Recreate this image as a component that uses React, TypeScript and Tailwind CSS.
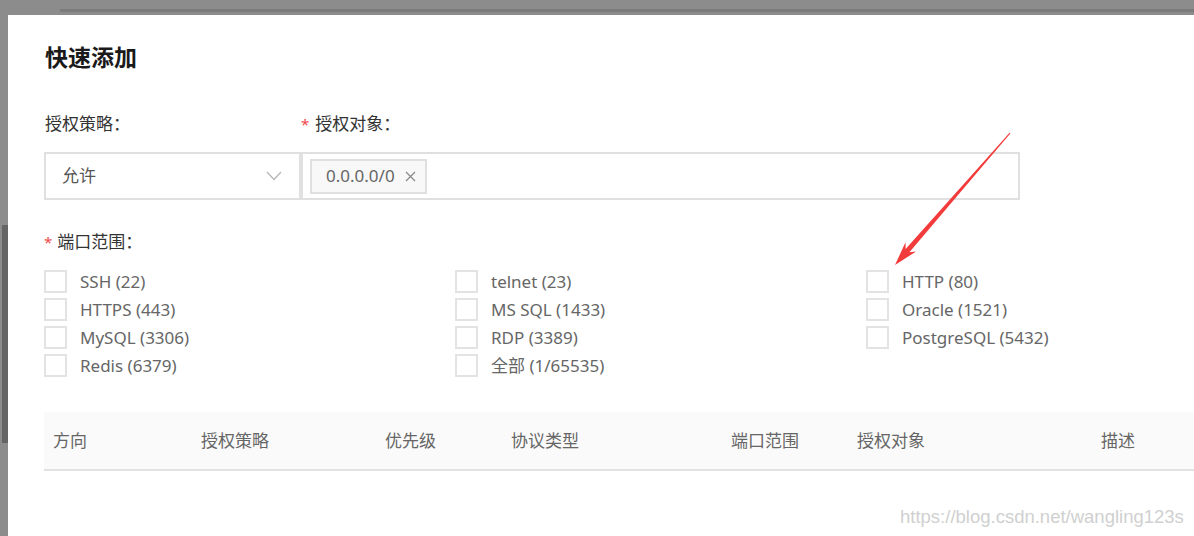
import React from "react";

const font = { fontFamily: "'Noto Sans','Noto Sans CJK SC',sans-serif" };

const ports = [
  ["SSH (22)", "telnet (23)", "HTTP (80)"],
  ["HTTPS (443)", "MS SQL (1433)", "Oracle (1521)"],
  ["MySQL (3306)", "RDP (3389)", "PostgreSQL (5432)"],
  ["Redis (6379)", "全部 (1/65535)", ""],
];

const cols = [
  { t: "方向", w: "w-[148px]" },
  { t: "授权策略", w: "w-[184px]" },
  { t: "优先级", w: "w-[126px]" },
  { t: "协议类型", w: "w-[220px]" },
  { t: "端口范围", w: "w-[126px]" },
  { t: "授权对象", w: "w-[244px]" },
  { t: "描述", w: "flex-1" },
];

function Check({ label }: { label: string }) {
  if (!label) return <div />;
  return (
    <div className="flex items-center h-[28px]">
      <div className="w-[23px] h-[23px] border-2 border-[#e3e3e3] bg-white" />
      <span className="ml-[13px] text-[17px] text-[#666] leading-none">{label}</span>
    </div>
  );
}

export default function App() {
  return (
    <div className="relative w-[1194px] h-[536px] bg-[#8c8c8c] overflow-hidden flex flex-col" style={font}>
      <div className="h-[15px] flex flex-col">
        <div className="h-[9px]" />
        <div className="h-[3px] ml-[60px] bg-[#7b7b7b]" />
      </div>
      <div className="flex flex-1">
        <div className="w-[8px] flex flex-col">
          <div className="h-[210px]" />
          <div className="ml-[2px] w-[6px] h-[218px] bg-[#656565]" />
        </div>
        <div className="flex-1 bg-white pl-[36px] pt-[26px]">
          <h1 className="text-[23px] font-bold text-[#1a1a1a] leading-[32px] ml-[1px]">快速添加</h1>

          <div className="flex mt-[41px] text-[17px] text-[#333] leading-[20px]">
            <div className="w-[257px] pl-[1px]">授权策略：</div>
            <div className="flex items-center">
              <span className="text-[#f04848] text-[15px] mr-[6px]">*</span>
              <span>授权对象：</span>
            </div>
          </div>

          <div className="flex mt-[18px]">
            <div className="w-[257px] h-[48px] border-2 border-[#e0e0e0] flex items-center justify-between pl-[16px] pr-[16px]">
              <span className="text-[17px] text-[#555]">允许</span>
              <svg width="16" height="10" viewBox="0 0 16 10" className="mr-[1px]">
                <path d="M1 1 L8 8.5 L15 1" stroke="#b5b5b5" strokeWidth="1.2" fill="none" />
              </svg>
            </div>
            <div className="w-[719px] h-[48px] border-2 border-[#e0e0e0] flex items-center pl-[7px]">
              <div className="h-[35px] border-2 border-[#e0e0e0] bg-[#f8f8f8] flex items-center pl-[14px] pr-[9px]">
                <span className="text-[17px] text-[#666]">0.0.0.0/0</span>
                <svg width="11" height="11" viewBox="0 0 11 11" className="ml-[10px]">
                  <path d="M1 1 L10 10 M10 1 L1 10" stroke="#888" strokeWidth="1.2" />
                </svg>
              </div>
            </div>
          </div>

          <div className="flex items-center mt-[32px] text-[17px] text-[#333] leading-[20px]">
            <span className="text-[#f04848] text-[15px] mr-[5px]">*</span>
            <span>端口范围：</span>
          </div>

          <div className="mt-[15px] grid grid-cols-[411px_411px_1fr]">
            {ports.map((row, i) =>
              row.map((p, j) => <Check key={i + "-" + j} label={p} />)
            )}
          </div>

          <div className="mt-[33px] h-[59px] bg-[#fafafa] border-b-2 border-[#e2e2e2] flex items-center text-[17px] text-[#666]">
            {cols.map((c) => (
              <div key={c.t} className={c.w + " pl-[9px]"}>{c.t}</div>
            ))}
          </div>
        </div>
      </div>

      <div className="absolute left-[900px] top-[505px] text-[18.5px] leading-[24px] text-[#d0d0d0]" style={{ fontFamily: "'Liberation Sans',Arial,sans-serif" }}>
        https://blog.csdn.net/wangling123s
      </div>

      <svg className="absolute left-0 top-0" width="1194" height="536" viewBox="0 0 1194 536">
        <polygon
          points="1010.5,133.3 909.4,252.3 916.1,251.5 895,265 905.5,242.3 905.6,249.1 1009.6,132.7"
          fill="#f23b3b"
        />
      </svg>
    </div>
  );
}
